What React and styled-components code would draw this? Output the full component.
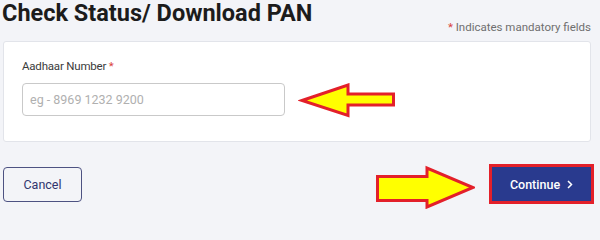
import styled, { createGlobalStyle } from "styled-components";

const GlobalStyle = createGlobalStyle`
  * {
    box-sizing: border-box;
  }
  body {
    margin: 0;
    background: #f3f4f8;
    font-family: Roboto, "Liberation Sans", Arial, sans-serif;
  }
`;

const Page = styled.div`
  width: 600px;
  padding: 0 9px 0 3px;
`;

const Header = styled.div`
  display: flex;
  justify-content: space-between;
  align-items: flex-end;
`;

const Title = styled.h1`
  margin: 0 0 6.5px -1px;
  font-size: 23.5px;
  line-height: 27.5px;
  font-weight: 700;
  color: #1c1c1c;
`;

const Note = styled.div`
  font-size: 11.5px;
  line-height: 14px;
  color: #6f6f6f;
`;

const Star = styled.span`
  color: #d9413c;
`;

const Card = styled.div`
  margin-top: 7px;
  background: #ffffff;
  border: 1px solid #e2e4ea;
  border-radius: 3px;
  padding: 17px 18px 23px;
`;

const Label = styled.label`
  display: block;
  font-size: 11.5px;
  line-height: 14px;
  letter-spacing: -0.2px;
  color: #3b3b3b;
`;

const FieldRow = styled.div`
  display: flex;
  align-items: flex-start;
  gap: 13px;
  margin-top: 10px;
`;

const Input = styled.input`
  width: 263px;
  height: 33px;
  border: 1px solid #c9c9c9;
  border-radius: 4px;
  padding: 0 7px;
  font-family: inherit;
  font-size: 12.5px;
  color: #333;
  background: #fff;
  outline: none;
  &::placeholder {
    color: #b0b0b0;
  }
`;

const Actions = styled.div`
  display: flex;
  justify-content: space-between;
  align-items: flex-start;
  margin-top: 25px;
`;

const Group = styled.div`
  display: flex;
  align-items: flex-start;
  gap: 17px;
`;

const Button = styled.button`
  height: ${(p) => (p.$primary ? "34px" : "35px")};
  width: ${(p) => (p.$primary ? "99px" : "79px")};
  display: flex;
  align-items: center;
  justify-content: center;
  gap: 7px;
  font-family: inherit;
  font-size: 12.5px;
  font-weight: ${(p) => (p.$primary ? 500 : 400)};
  border-radius: ${(p) => (p.$primary ? "0" : "4px")};
  border: ${(p) => (p.$primary ? "none" : "1px solid #4d5282")};
  background: ${(p) => (p.$primary ? "#293a8e" : "transparent")};
  color: ${(p) => (p.$primary ? "#ffffff" : "#30356e")};
  outline: ${(p) => (p.$primary ? "3px solid #e3202a" : "none")};
  cursor: pointer;
`;

const Arrow = styled.svg`
  display: block;
  flex-shrink: 0;
  margin-top: ${(p) => p.$offset || 0}px;
`;

function LeftArrow() {
  return (
    <Arrow width="100" height="35" viewBox="0 0 100 35">
      <polygon
        points="4,17.5 50,2 50,11 95.5,11 95.5,22 50,22 50,32.5"
        fill="#ffff00"
        stroke="#e3202a"
        strokeWidth="3"
        strokeLinejoin="miter"
      />
    </Arrow>
  );
}

function RightArrow() {
  return (
    <Arrow width="100" height="44" viewBox="0 0 100 44" $offset={-2}>
      <polygon
        points="2.5,11.5 52,11.5 52,3 98,22.5 52,42 52,35.5 2.5,35.5"
        fill="#ffff00"
        stroke="#e3202a"
        strokeWidth="3"
        strokeLinejoin="miter"
      />
    </Arrow>
  );
}

function Chevron() {
  return (
    <svg width="6" height="9" viewBox="0 0 6 9">
      <path d="M1 1 L4.5 4.5 L1 8" fill="none" stroke="#fff" strokeWidth="1.5" />
    </svg>
  );
}

export default function App() {
  return (
    <Page>
      <GlobalStyle />
      <Header>
        <Title>Check Status/ Download PAN</Title>
        <Note>
          <Star>*</Star> Indicates mandatory fields
        </Note>
      </Header>
      <Card>
        <Label>
          Aadhaar Number <Star>*</Star>
        </Label>
        <FieldRow>
          <Input placeholder="eg - 8969 1232 9200" />
          <LeftArrow />
        </FieldRow>
      </Card>
      <Actions>
        <Button>Cancel</Button>
        <Group>
          <RightArrow />
          <Button $primary>
            Continue
            <Chevron />
          </Button>
        </Group>
      </Actions>
    </Page>
  );
}
